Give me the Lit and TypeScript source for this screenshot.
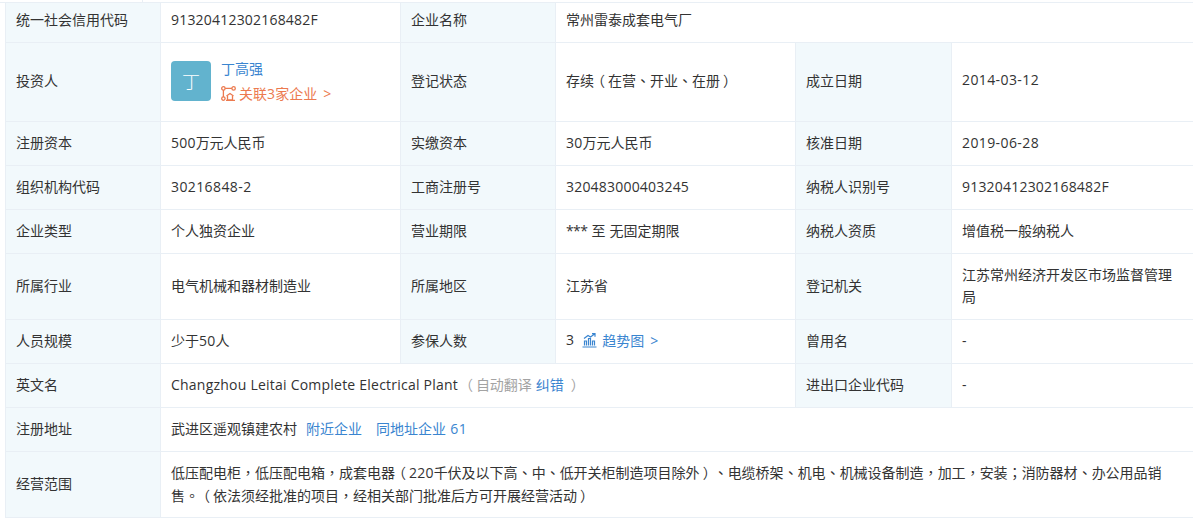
import { LitElement, html, css } from "lit";
import { customElement } from "lit/decorators.js";

const runs = (t: string) =>
  (t.match(/[\x20-\x7e]+|[，、；。（）]|[^\x20-\x7e，、；。（）]+/g) || []).map((s) => {
    if (/^[\x20-\x7e]/.test(s)) return html`<span class="l">${s}</span>`;
    if (s === "（") return html`<span class="p po">${s}</span>`;
    if (s === "）") return html`<span class="p pc">${s}</span>`;
    if (/^[，、；。]/.test(s)) return html`<span class="p">${s}</span>`;
    return s;
  });

@customElement("app-root")
export class AppRoot extends LitElement {
  static styles = css`
    :host { display: block; width: 1193px; height: 519px; overflow: hidden; background: #fff; padding: 0 0 0 5px; box-sizing: border-box;
      font-family: "Noto Sans CJK SC", "Open Sans", sans-serif; font-size: 14px; color: #333; text-spacing-trim: space-all; }
    .strip { margin-left: -5px; height: 2px; box-shadow: 0 1px 0 #e9eff5; }
    .strip div { width: 142px; height: 2px; border-right: 1px solid #e9eff5; }
    table { border-collapse: collapse; table-layout: fixed; width: 1188px; }
    td { border: 1px solid #e9eff5; padding: 0 10px 3px; line-height: 22px; box-sizing: border-box; vertical-align: middle; }
    .k { background: #f2f9fc; }
    .l { font-family: "Open Sans", sans-serif; letter-spacing: 0.2px; }
    .wide .l { letter-spacing: 0.4px; }
    .en .l { letter-spacing: 0.225px; }
    .num .l { letter-spacing: 0.6px; }
    .st { font-family: "Open Sans", sans-serif; letter-spacing: -0.6px; }
    .term { word-spacing: 1px; }
    .p { font-family: "Noto Sans CJK TC", sans-serif; }
    .po { margin: 0 3px 0 -3px; }
    .pc { margin: 0 -3px 0 3px; }
    .h40 { height: 40px; } .h79 { height: 79px; } .h44 { height: 44px; } .h66 { height: 66px; }
    .h40 td { padding-bottom: 7px; }
    .h79 td { padding-bottom: 5px; }
    a { color: #3a85d0; text-decoration: none; }
    .person { display: flex; align-items: center; gap: 10px; margin-top: 3px; }
    .avatar { width: 40px; height: 40px; border-radius: 4px; background: #62b3ce; color: #fff; font-size: 18px; font-weight: 300; display: flex; align-items: center; justify-content: center; }
    .info { display: flex; flex-direction: column; }
    .name { line-height: 25px; }
    .rel { color: #ec7a4f; display: flex; align-items: center; gap: 3px; line-height: 25px; }
    .rel svg, .trend svg { flex: none; }
    .arrow { margin-left: 6px; }
    .trend { display: inline-flex; align-items: center; gap: 5px; margin-left: 8px; }
    .inline { display: flex; align-items: center; }
    .gray { color: #a3a3a3; }
    .near { margin-left: 9px; }
    .same { margin-left: 14px; }
  `;

  render() {
    const k = (t: string) => html`<td class="k">${t}</td>`;
    const v = (t: string) => html`<td>${runs(t)}</td>`;
    const w = (t: string) => html`<td class="wide">${runs(t)}</td>`;
    return html`<div class="strip"><div></div></div>
    <table>
      <colgroup>
        <col style="width:155px" /><col style="width:240px" /><col style="width:155px" />
        <col style="width:240px" /><col style="width:156px" /><col style="width:242px" />
      </colgroup>
      <tbody>
        <tr class="h40">${k("统一社会信用代码")}${v("91320412302168482F")}${k("企业名称")}<td colspan="3">常州雷泰成套电气厂</td></tr>
        <tr class="h79">${k("投资人")}
          <td><div class="person"><div class="avatar">丁</div><div class="info">
            <a class="name" href="#">丁高强</a>
            <div class="rel"><svg width="15" height="15" viewBox="0 0 15 15" fill="none" stroke="#ec7a4f" stroke-width="1.3"><circle cx="2.4" cy="2.4" r="1.7"/><circle cx="12.6" cy="2.4" r="1.7"/><circle cx="2.4" cy="12.6" r="1.7"/><path d="M4.1 2.4h6.8M2.4 4.1v6.8M5.5 10l3.5-2.5 3.5 2.5M6.5 10v4h5v-4M5 14.3h9"/></svg><span>${runs("关联3家企业")}<span class="arrow l">&gt;</span></span></div>
          </div></div></td>
          ${k("登记状态")}${v("存续（在营、开业、在册）")}${k("成立日期")}${w("2014-03-12")}</tr>
        <tr class="h44">${k("注册资本")}${v("500万元人民币")}${k("实缴资本")}${v("30万元人民币")}${k("核准日期")}${w("2019-06-28")}</tr>
        <tr class="h44">${k("组织机构代码")}${w("30216848-2")}${k("工商注册号")}${v("320483000403245")}${k("纳税人识别号")}${v("91320412302168482F")}</tr>
        <tr class="h44">${k("企业类型")}${v("个人独资企业")}${k("营业期限")}<td class="term"><span class="st">*** </span>至 无固定期限</td>${k("纳税人资质")}${v("增值税一般纳税人")}</tr>
        <tr class="h66">${k("所属行业")}${v("电气机械和器材制造业")}${k("所属地区")}${v("江苏省")}${k("登记机关")}${v("江苏常州经济开发区市场监督管理局")}</tr>
        <tr class="h44">${k("人员规模")}${v("少于50人")}${k("参保人数")}
          <td><div class="inline"><span class="l">3</span><a class="trend" href="#"><svg width="15" height="15" viewBox="0 0 15 15" fill="none" stroke="#3a85d0" stroke-width="1.2"><path d="M0.5 14h14M2.5 12.5V8h2v4.5M6.5 12.5V5.5h2v7M10.5 12.5V8h2v4.5M2 5.5l4-3 2.5 1.5L12.5 1M10 .7h3v3"/></svg><span>趋势图<span class="arrow l">&gt;</span></span></a></div></td>
          ${k("曾用名")}${v("-")}</tr>
        <tr class="h44">${k("英文名")}<td colspan="3" class="en">${runs("Changzhou Leitai Complete Electrical Plant ")}<span class="gray">${runs("（自动翻译 ")}<a href="#">纠错</a>${runs(" ）")}</span></td>${k("进出口企业代码")}${v("-")}</tr>
        <tr class="h44">${k("注册地址")}<td colspan="5">武进区遥观镇建农村<a class="near" href="#">附近企业</a><a class="same num" href="#">${runs("同地址企业 61")}</a></td></tr>
        <tr class="h66">${k("经营范围")}<td colspan="5">${runs("低压配电柜，低压配电箱，成套电器（220千伏及以下高、中、低开关柜制造项目除外）、电缆桥架、机电、机械设备制造，加工，安装；消防器材、办公用品销售。（依法须经批准的项目，经相关部门批准后方可开展经营活动）")}</td></tr>
      </tbody>
    </table>`;
  }
}
